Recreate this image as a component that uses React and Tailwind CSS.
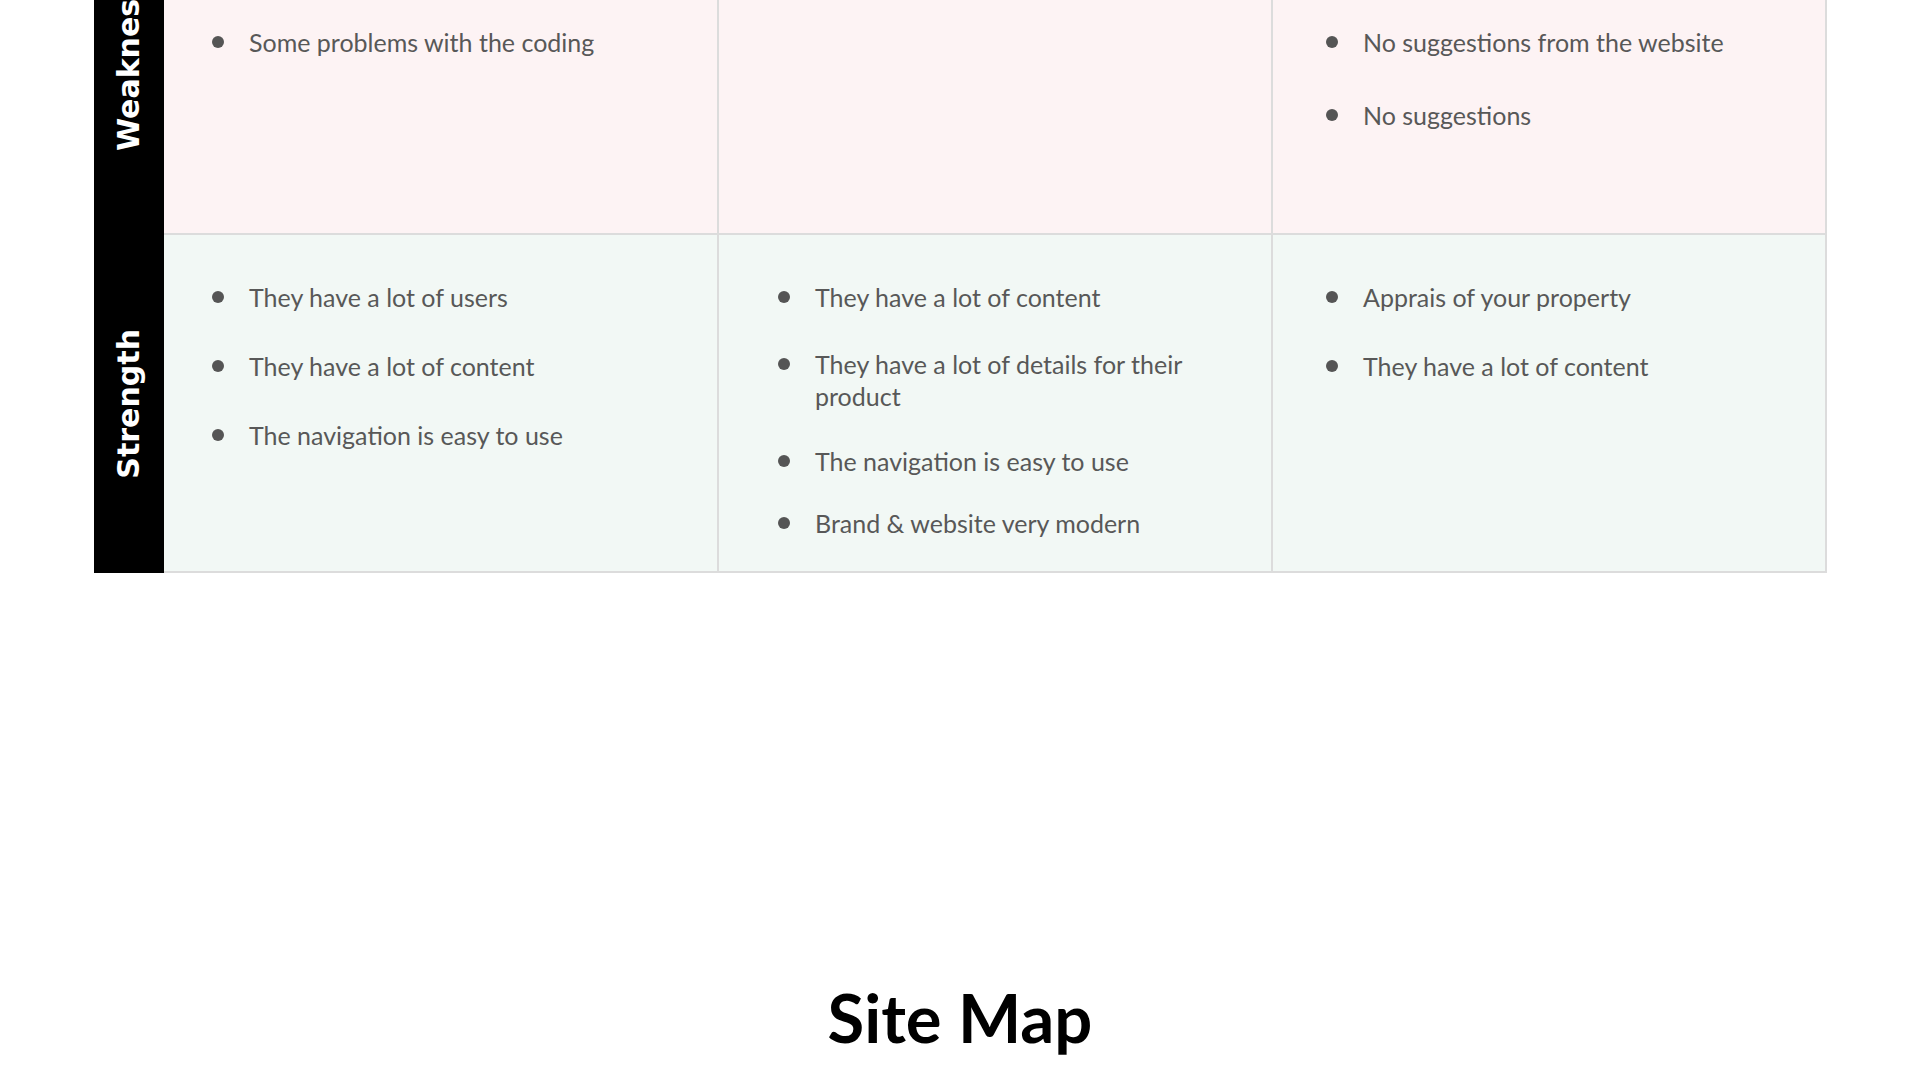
import React from "react";

const weakness = [
  {
    pad: "pl-[48px] pt-[41px]",
    items: [
      { lines: ["Too much information on the same", "pages"], mt: "mt-0" },
      { lines: ["Some problems with the coding"], mt: "mt-[24px]" },
    ],
  },
  {
    pad: "pl-[59px] pt-[41px]",
    items: [{ lines: ["The website is a bit slow on some", "pages"], mt: "mt-0" }],
  },
  {
    pad: "pl-[53px] pt-[41px]",
    items: [
      { lines: ["Not many details about the", "website"], mt: "mt-0" },
      { lines: ["No suggestions from the website"], mt: "mt-[24px]" },
      { lines: ["No suggestions"], mt: "mt-[41px]" },
    ],
  },
];

const strength = [
  {
    pad: "pl-[48px] pt-[46px]",
    items: [
      { lines: ["They have a lot of users"], mt: "mt-0" },
      { lines: ["They have a lot of content"], mt: "mt-[37px]" },
      { lines: ["The navigation is easy to use"], mt: "mt-[37px]" },
    ],
  },
  {
    pad: "pl-[59px] pt-[46px]",
    items: [
      { lines: ["They have a lot of content"], mt: "mt-0" },
      { lines: ["They have a lot of details for their", "product"], mt: "mt-[35px]" },
      { lines: ["The navigation is easy to use"], mt: "mt-[33px]" },
      { lines: ["Brand & website very modern"], mt: "mt-[30px]" },
    ],
  },
  {
    pad: "pl-[53px] pt-[46px]",
    items: [
      { lines: ["Apprais of your property"], mt: "mt-0" },
      { lines: ["They have a lot of content"], mt: "mt-[37px]" },
    ],
  },
];

function Item({ item }) {
  return (
    <li className={`flex items-start ${item.mt}`}>
      <span className="mt-[10px] h-3 w-3 shrink-0 rounded-full bg-[#555555]" />
      <span className="ml-[25px] text-[25px] leading-[32px] text-[#585858]">
        {item.lines.map((l, i) => (
          <React.Fragment key={i}>
            {i > 0 && <br />}
            {l}
          </React.Fragment>
        ))}
      </span>
    </li>
  );
}

function Row({ label, cells, bg }) {
  return (
    <div className="grid h-[338px] grid-cols-[70px_555px_554px_554px]">
      <div className="flex items-center justify-center bg-black">
        <span className="rotate-180 whitespace-nowrap font-['DejaVu_Sans',sans-serif] text-[30px] font-bold leading-none text-white [writing-mode:vertical-rl]">
          {label}
        </span>
      </div>
      {cells.map((c, i) => (
        <div
          key={i}
          className={`border-b-2 border-r-2 border-[#dcdcdc] ${bg} ${c.pad}`}
        >
          <ul className="flex flex-col">
            {c.items.map((it, j) => (
              <Item key={j} item={it} />
            ))}
          </ul>
        </div>
      ))}
    </div>
  );
}

export default function App() {
  return (
    <div className="h-[1080px] w-full overflow-hidden bg-white font-[Lato,sans-serif]">
      <div className="-mt-[103px] flex flex-col">
        <div className="ml-[94px] flex w-[1733px] flex-col">
          <Row label="Weakness" cells={weakness} bg="bg-[#fdf3f4]" />
          <Row label="Strength" cells={strength} bg="bg-[#f2f8f5]" />
        </div>
        <h2 className="mt-[411px] text-center text-[67px] font-bold leading-none text-black">
          Site Map
        </h2>
      </div>
    </div>
  );
}
